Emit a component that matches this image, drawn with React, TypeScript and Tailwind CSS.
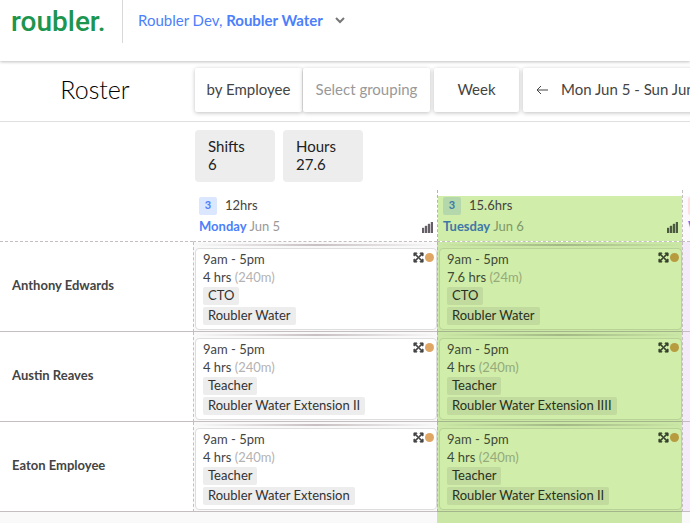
import { FaExpandArrowsAlt } from "react-icons/fa";

type Shift = { hours: string; minutes: string; role: string; place: string };
type Day = { name: string; date: string; hours: string; tone: "plain" | "today" | "weekend" };

const days: Day[] = [
  { name: "Monday", date: "Jun 5", hours: "12hrs", tone: "plain" },
  { name: "Tuesday", date: "Jun 6", hours: "15.6hrs", tone: "today" },
  { name: "Wednesday", date: "Jun 7", hours: "0hrs", tone: "weekend" },
];

const rows: { name: string; shifts: (Shift | null)[] }[] = [
  {
    name: "Anthony Edwards",
    shifts: [
      { hours: "4 hrs", minutes: "(240m)", role: "CTO", place: "Roubler Water" },
      { hours: "7.6 hrs", minutes: "(24m)", role: "CTO", place: "Roubler Water" },
      null,
    ],
  },
  {
    name: "Austin Reaves",
    shifts: [
      { hours: "4 hrs", minutes: "(240m)", role: "Teacher", place: "Roubler Water Extension II" },
      { hours: "4 hrs", minutes: "(240m)", role: "Teacher", place: "Roubler Water Extension IIII" },
      null,
    ],
  },
  {
    name: "Eaton Employee",
    shifts: [
      { hours: "4 hrs", minutes: "(240m)", role: "Teacher", place: "Roubler Water Extension" },
      { hours: "4 hrs", minutes: "(240m)", role: "Teacher", place: "Roubler Water Extension II" },
      null,
    ],
  },
];

const headTone = {
  plain: { cell: "bg-white", badge: "bg-[#dbe6ff] text-[#4c80fb]", name: "text-[#4c80fb]", date: "text-[#999999]", line: "border-l-transparent" },
  today: { cell: "bg-[#d0edaa]", badge: "bg-[#b4d8ac] text-[#3f77a8]", name: "text-[#3f77a8]", date: "text-[#7f9868]", line: "border-l-[#a9bd8e]" },
  weekend: { cell: "bg-[#fcf8fe]", badge: "bg-[#ffe0e2] text-[#e0606a]", name: "text-[#4c80fb]", date: "text-[#999999]", line: "border-l-[#c4bec0]" },
};

const cellTone = {
  plain: "bg-[#f9f9f9] border-l-[#c4bec0] border-b-[#c4bec0]",
  today: "bg-[#cae7a5] border-l-[#a9bd8e] border-b-[#a4b58c]",
  weekend: "bg-[#f4eaf9] border-l-[#c4bec0] border-b-[#c4bec0]",
};

function Bars({ today }: { today: boolean }) {
  return (
    <svg width="11" height="11" viewBox="0 0 11 11" className={today ? "text-[#4d5a42]" : "text-[#665f68]"} aria-hidden="true">
      <path fill="currentColor" stroke="currentColor" strokeWidth="0.4" d="M0 6h2v5H0zM3 4h2v7H3zM6 2h2v9H6zM9 0h2v11H9z" />
    </svg>
  );
}

function ShiftCard({ shift, today }: { shift: Shift; today: boolean }) {
  const tag = `h-[18px] rounded-[2px] px-[5px] leading-[17px] ${today ? "bg-[#c0db9d] text-[#28301f]" : "bg-[#ededed] text-[#333333]"}`;
  return (
    <div
      className={`flex h-[82px] justify-between rounded border pt-px pr-[2px] pl-[7px] text-[13px] ${
        today ? "border-[#b7d196] bg-[#d0edaa] text-[#3f4a34]" : "border-[#dddddd] bg-white text-[#444444]"
      }`}
    >
      <div className="flex flex-col items-start leading-[18px] whitespace-nowrap">
        <span>9am - 5pm</span>
        <span>
          {shift.hours} <span className={today ? "text-[#95aa7a]" : "text-[#b3b3b3]"}>{shift.minutes}</span>
        </span>
        <span className={`mt-px ${tag}`}>{shift.role}</span>
        <span className={`mt-[2px] ${tag}`}>{shift.place}</span>
      </div>
      <div className="flex h-[15px] items-center gap-px">
        <FaExpandArrowsAlt className={`size-[11px] stroke-current stroke-[24px] ${today ? "text-[#37422c]" : "text-[#444444]"}`} />
        <span className={`size-[9px] rounded-full ${today ? "bg-[#b79b3f]" : "bg-[#dfa562]"}`} />
      </div>
    </div>
  );
}

export default function App() {
  const control = "flex h-11 items-center rounded-[2px] bg-white text-[15px] whitespace-nowrap shadow-[0_1px_4px_rgba(0,0,0,0.25)]";
  return (
    <div className="flex min-h-screen flex-col overflow-hidden bg-white font-[Lato,sans-serif] text-[#444444]">
      <header className="flex h-[61px] items-start shadow-[0_1px_3px_rgba(0,0,0,0.25)]">
        <a href="#" className="flex h-[43px] w-[123px] items-center border-r border-[#d8d8d8] pl-[11px] font-[Roboto,sans-serif] text-[28px] leading-none font-medium text-[#1c954f]">
          roubler.
        </a>
        <button className="flex h-[41px] items-center pl-[15px] text-[15px] text-[#4c80fb]">
          <span>Roubler Dev, <b>Roubler Water</b></span>
          <svg width="10" height="7" viewBox="0 0 10 7" className="ml-3" fill="none" stroke="#777777" strokeWidth="2" aria-hidden="true">
            <path d="M1 1l4 4 4-4" />
          </svg>
        </button>
      </header>

      <div className="flex h-[61px] items-center border-b border-[#e0e0e0]">
        <h1 className="w-[190px] shrink-0 pb-1 text-center text-[25px] leading-8 font-light text-black">Roster</h1>
        <div className="flex gap-1 pb-[3px] pl-[5px]">
          <div className="flex gap-px">
            <button className={`${control} w-[107px] justify-center`}>by Employee</button>
            <button className={`${control} w-[127px] justify-center text-[#999999]`}>Select grouping</button>
          </div>
          <button className={`${control} w-[85px] justify-center`}>Week</button>
          <button className={`${control} w-60 pl-[13px]`}>
            <svg width="12" height="10" viewBox="0 0 12 10" className="mr-[13px]" fill="none" stroke="#444444" aria-hidden="true">
              <path d="M5 1L1 5l4 4M1 5h11" />
            </svg>
            Mon Jun 5 - Sun Jun 11
          </button>
        </div>
      </div>

      <dl className="flex gap-2 pt-2 pl-[195px] text-[15px] leading-[18px] text-[#222222]">
        {[["Shifts", "6"], ["Hours", "27.6"]].map(([label, value]) => (
          <div key={label} className="h-[52px] w-20 rounded bg-[#ededed] pt-[7px] pl-[13px]">
            <dt>{label}</dt>
            <dd>{value}</dd>
          </div>
        ))}
      </dl>

      <div className="mt-2 flex-1 overflow-hidden bg-[#f9f9f9]">
        <table className="w-[927px] table-fixed border-separate border-spacing-0 text-[13px]">
          <colgroup>
            <col className="w-[193px]" />
            <col className="w-[244px]" />
            <col className="w-[245px]" />
            <col className="w-[245px]" />
          </colgroup>
          <thead>
            <tr>
              <td className="h-[52px] border-b border-dashed border-[#c4bec0] bg-white" />
              {days.map((day) => {
                const tone = headTone[day.tone];
                return (
                  <th key={day.name} scope="col" className={`h-[52px] border-b border-l border-dashed border-b-[#c4bec0] bg-white p-0 text-left font-normal ${tone.line}`}>
                    <div className={`mt-[6px] flex h-[45px] items-end justify-between pr-1 pl-[5px] ${tone.cell}`}>
                      <div className="flex h-full flex-col pt-px">
                        <div className="flex h-[18px] items-center gap-2">
                          <span className={`h-[18px] w-[18px] rounded-[2px] text-center text-[11px] leading-4 font-bold ${tone.badge}`}>3</span>
                          <span>{day.hours}</span>
                        </div>
                        <div className={`leading-[22px] ${tone.date}`}>
                          <b className={tone.name}>{day.name}</b> {day.date}
                        </div>
                      </div>
                      <div className="pb-2">
                        <Bars today={day.tone === "today"} />
                      </div>
                    </div>
                  </th>
                );
              })}
            </tr>
          </thead>
          <tbody>
            {rows.map((row) => (
              <tr key={row.name}>
                <th scope="row" className="h-[90px] border-b border-[#c4bec0] bg-white p-0 pb-[2px] pl-3 text-left text-[13px] font-bold">
                  {row.name}
                </th>
                {row.shifts.map((shift, i) => {
                  const today = days[i].tone === "today";
                  return (
                    <td key={i} className={`h-[90px] border-b border-l [border-left-style:dashed] py-px pl-px align-top ${cellTone[days[i].tone]}`}>
                      {shift && (
                        <>
                          <div className={`mt-px mb-[2px] h-[2px] bg-linear-to-r from-transparent to-transparent ${today ? "via-[#a3b886]" : "via-[#c8c0c2]"}`} />
                          <ShiftCard shift={shift} today={today} />
                        </>
                      )}
                    </td>
                  );
                })}
              </tr>
            ))}
            <tr>
              <td className="h-4" />
              <td />
              <td className="bg-[#cae7a5]" />
              <td />
            </tr>
          </tbody>
        </table>
      </div>
    </div>
  );
}
